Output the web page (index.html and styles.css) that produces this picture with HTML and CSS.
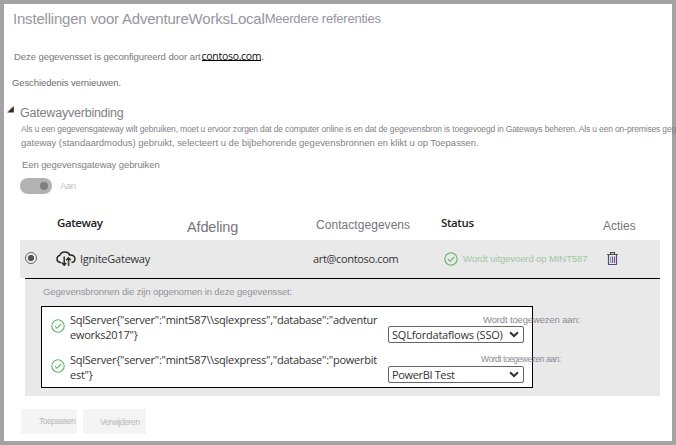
FILE: index.html
```html
<!DOCTYPE html>
<html lang="nl">
<head>
<meta charset="utf-8">
<title>Instellingen</title>
<link rel="stylesheet" href="styles.css">
</head>
<body>
<main class="frame">
  <h1 class="title">Instellingen voor AdventureWorksLocal<span class="title-sub">Meerdere referenties</span></h1>
  <p class="intro"><span>Deze gegevensset is geconfigureerd door art</span><a class="owner">contoso.com</a><span class="dot">.</span></p>
  <p class="history">Geschiedenis vernieuwen.</p>

  <section class="gateway">
    <div class="section-head">
      <svg class="caret" width="7" height="7" viewBox="0 0 7 7"><path d="M6.8 0V6.5H0.3Z" fill="#352a28"/><path d="M0.3 6.1L5.6 0.6" stroke="#d9a066" stroke-width=".6"/></svg>
      <h2>Gatewayverbinding</h2>
    </div>
    <p class="desc desc-first">Als u een gegevensgateway wilt gebruiken, moet u ervoor zorgen dat de computer online is en dat de gegevensbron is toegevoegd in Gateways beheren. Als u een on-premises geg</p>
    <p class="desc">gateway (standaardmodus) gebruikt, selecteert u de bijbehorende gegevensbronnen en klikt u op Toepassen.</p>
    <p class="label">Een gegevensgateway gebruiken</p>
    <div class="toggle-row"><span class="toggle"><i></i></span><span class="toggle-text">Aan</span></div>

    <div class="columns head">
      <b class="c-gateway">Gateway</b>
      <span class="c-dept">Afdeling</span>
      <span class="c-contact">Contactgegevens</span>
      <b class="c-status">Status</b>
      <span class="c-actions">Acties</span>
    </div>
    <div class="columns row">
      <span class="radio"></span>
      <div class="name">
        <svg width="20" height="16" viewBox="0 0 20 16" fill="none" stroke="#222" stroke-width="1.4"><path d="M5 11.5H4.3A3.6 3.6 0 0 1 3.8 4.4C4.6 2 7 .8 9.4 1C11.4 1.1 13 2.4 13.6 4.1C16.8 3.6 19 5.4 19 7.8C19 9.9 17.5 11.4 15.5 11.5"/><path d="M8.2 5.5V14M5.7 11.6L8.2 14.2L10.2 12"/><path d="M12.5 15V7M10.2 9.2L12.5 6.8L14.8 9.2"/><path d="M13.2 9V15" stroke="#d28a32" stroke-width=".9"/></svg>
        <span class="ui ignite">IgniteGateway</span>
      </div>
      <span class="ui mail">art@contoso.com</span>
      <div class="state">
        <svg class="check" width="14" height="14" viewBox="0 0 14 14" fill="none" stroke="#5cb565"><circle cx="7" cy="7" r="6.2" stroke-width="1.1"/><path d="M3.9 7.2L6.1 9.3L10.3 4.9" stroke-width="1.1"/></svg>
        <span>Wordt uitgevoerd op MINT587</span>
      </div>
      <svg class="trash" width="11" height="14" viewBox="0 0 11 14" fill="none"><path d="M0 2.5H11M3.5 2V.7H7.5V2" stroke="#555" stroke-width="1.2"/><path d="M1.5 3V12.5H9.5V3" stroke="#584a7c" stroke-width="1.2"/><path d="M3.7 4.5V11" stroke="#6d93c5"/><path d="M5.5 4.5V11" stroke="#a5526c"/><path d="M7.4 4.5V11" stroke="#4d4f9d"/></svg>
    </div>

    <div class="panel">
      <p class="panel-title">Gegevensbronnen die zijn opgenomen in deze gegevensset:</p>
      <div class="sources">
        <div class="source">
          <svg class="check" width="14" height="14" viewBox="0 0 14 14" fill="none" stroke="#5cb565"><circle cx="7" cy="7" r="6.2" stroke-width="1.1"/><path d="M3.9 7.2L6.1 9.3L10.3 4.9" stroke-width="1.1"/></svg>
          <p class="ui conn">SqlServer{"server":"mint587\\sqlexpress","database":"adventur<br>eworks2017"}</p>
          <div class="map">
            <span class="map-label">Wordt toegewezen aan:</span>
            <div class="ui select"><span class="opt-one">SQLfordataflows (SSO)</span><svg width="10" height="7" viewBox="0 0 10 7" fill="none" stroke="#333" stroke-width="2"><path d="M1 1.2L5 5L9 1.2"/></svg></div>
          </div>
        </div>
        <div class="source">
          <svg class="check" width="14" height="14" viewBox="0 0 14 14" fill="none" stroke="#5cb565"><circle cx="7" cy="7" r="6.2" stroke-width="1.1"/><path d="M3.9 7.2L6.1 9.3L10.3 4.9" stroke-width="1.1"/></svg>
          <p class="ui conn">SqlServer{"server":"mint587\\sqlexpress","database":"powerbit<br>est"}</p>
          <div class="map">
            <span class="map-label tight">Wordt toegewezen aan:</span>
            <div class="ui select"><span class="opt-two">PowerBI Test</span><svg width="10" height="7" viewBox="0 0 10 7" fill="none" stroke="#333" stroke-width="2"><path d="M1 1.2L5 5L9 1.2"/></svg></div>
          </div>
        </div>
      </div>
    </div>

    <div class="buttons">
      <div class="btn apply">Toepassen</div>
      <div class="btn remove">Verwijderen</div>
    </div>
  </section>
</main>
</body>
</html>
```
FILE: styles.css
```css
* { box-sizing: border-box; }
body {
  margin: 0;
  overflow: hidden;
  font-family: "Liberation Sans", Arial, sans-serif;
  background: #fff;
}
h1, h2, p { margin: 0; font-weight: 400; }
svg { display: block; flex: none; }
p, h1, h2, span, b, a { white-space: nowrap; }

.frame {
  width: 676px;
  height: 445px;
  border: 4px solid #a3a3a3;
  padding-top: 5px;
}
.title {
  padding-left: 9px;
  font-size: 15px;
  line-height: 20px;
  height: 20px;
  letter-spacing: -.2px;
  color: #97969d;
}
.title-sub {
  position: relative;
  top: -1px;
  font-size: 13px;
  letter-spacing: -.23px;
}
.intro {
  display: flex;
  margin-top: 21px;
  padding-left: 10px;
  height: 14px;
  font-size: 9.5px;
  line-height: 14px;
  letter-spacing: -.07px;
  color: #77767c;
}
.owner {
  margin-left: 1px;
  height: 11px;
  border-bottom: 1px solid #000;
  font: 10.5px/13px "Open Sans", sans-serif;
  letter-spacing: -.3px;
  color: #111;
}
.dot { color: #222; }
.history {
  margin-top: 12px;
  padding-left: 8px;
  font-size: 9.5px;
  line-height: 14px;
  letter-spacing: -.1px;
  color: #6c6b72;
}
.section-head { display: flex; margin-top: 15px; padding-left: 3px; height: 17px; }
.caret { margin-top: 1px; }
.section-head h2 {
  margin-left: 6px;
  font-size: 12.5px;
  line-height: 16px;
  letter-spacing: -.2px;
  color: #807e84;
}
.desc {
  padding-left: 17px;
  height: 14px;
  font-size: 9.5px;
  line-height: 14px;
  letter-spacing: -.02px;
  color: #837f88;
}
.desc-first { font-size: 8.5px; letter-spacing: -.15px; }
.label {
  margin-top: 8px;
  padding-left: 18px;
  font-size: 9.5px;
  line-height: 14px;
  letter-spacing: -.1px;
  color: #817e86;
}
.toggle-row { display: flex; margin: 6px 0 0 16px; height: 16px; }
.toggle {
  width: 32px;
  height: 16px;
  border-radius: 8px;
  padding: 4px;
  background: #b2b2b2;
}
.toggle i { display: block; width: 8px; height: 8px; margin-left: 16px; border-radius: 50%; background: #7f7f7f; }
.toggle-text { margin-left: 8px; font-size: 9.5px; line-height: 16px; letter-spacing: -.4px; color: #c3c2c6; }

.columns {
  display: grid;
  margin-left: 16px;
  width: 640px;
}
.head {
  grid-template-columns: 130px 129px 125px 162px auto;
  margin-top: 16px;
  padding-left: 37px;
  height: 30px;
  line-height: 16px;
  color: #77757b;
}
.head b { margin-top: 5px; font: 600 11.5px/16px "Open Sans", sans-serif; letter-spacing: -.4px; color: #222; }
.c-dept { margin-top: 9px; font-size: 14.5px; letter-spacing: -.15px; }
.c-contact { margin-top: 7px; font-size: 12px; letter-spacing: .05px; }
.c-actions { margin-top: 8px; font-size: 12px; }

.ui { font-family: "Open Sans", sans-serif; font-size: 11px; color: #333; }
.row {
  grid-template-columns: 31px 257px 131px 163px auto;
  align-items: center;
  padding: 0 0 1px 5px;
  height: 38px;
  background: #e9e9e9;
}
.radio {
  width: 12px;
  height: 12px;
  margin-top: -1px;
  border: 1px solid #666;
  border-radius: 50%;
  background: radial-gradient(circle, #555 0 2.8px, #eee 3.4px);
}
.name, .state { display: flex; align-items: center; }
.ignite { margin-left: 4px; letter-spacing: -.23px; }
.mail { letter-spacing: -.33px; }
.state span { margin-left: 5px; font-size: 9.5px; letter-spacing: -.1px; color: #a0c8a4; }

.panel {
  margin-left: 21px;
  width: 635px;
  height: 118px;
  border-top: 1px solid #000;
  padding: 6px 0 0 16px;
  background: #e9e9e9;
}
.panel-title {
  padding-left: 2px;
  height: 21px;
  font-size: 9.5px;
  line-height: 14px;
  letter-spacing: -.12px;
  color: #939297;
}
.sources {
  width: 492px;
  height: 82px;
  border: 1px solid #000;
  padding: 5px 0 0 9px;
  background: #fff;
}
.source { display: flex; height: 40px; }
.source .check { margin-top: 7px; }
.conn { flex: none; margin-left: 5px; width: 318px; line-height: 15px; letter-spacing: -.25px; }
.map { flex: none; }
.map-label {
  display: block;
  margin-left: 95px;
  padding-top: 1px;
  height: 14px;
  font-size: 9.5px;
  line-height: 14px;
  letter-spacing: -.15px;
  color: #8b8994;
}
.map-label.tight { margin-left: 93px; padding-top: 0; font-size: 8.5px; letter-spacing: -.48px; }
.select {
  display: flex;
  justify-content: space-between;
  align-items: center;
  width: 136px;
  height: 17px;
  padding: 0 4px 0 3px;
  border: 1px solid #666;
  border-radius: 2px;
  background: #fff;
  line-height: 15px;
}
.select span { letter-spacing: -.2px; }
.select .opt-two { letter-spacing: -.35px; }

.buttons { display: flex; gap: 6px; margin: 13px 0 0 17px; }
.btn { height: 25px; background: #f4f4f4; font-size: 8.5px; line-height: 25px; color: #b9b8ba; }
.apply { width: 56px; padding-left: 18px; letter-spacing: -.55px; }
.remove { width: 63px; padding: 1px 0 0 17px; letter-spacing: -.45px; }
```
